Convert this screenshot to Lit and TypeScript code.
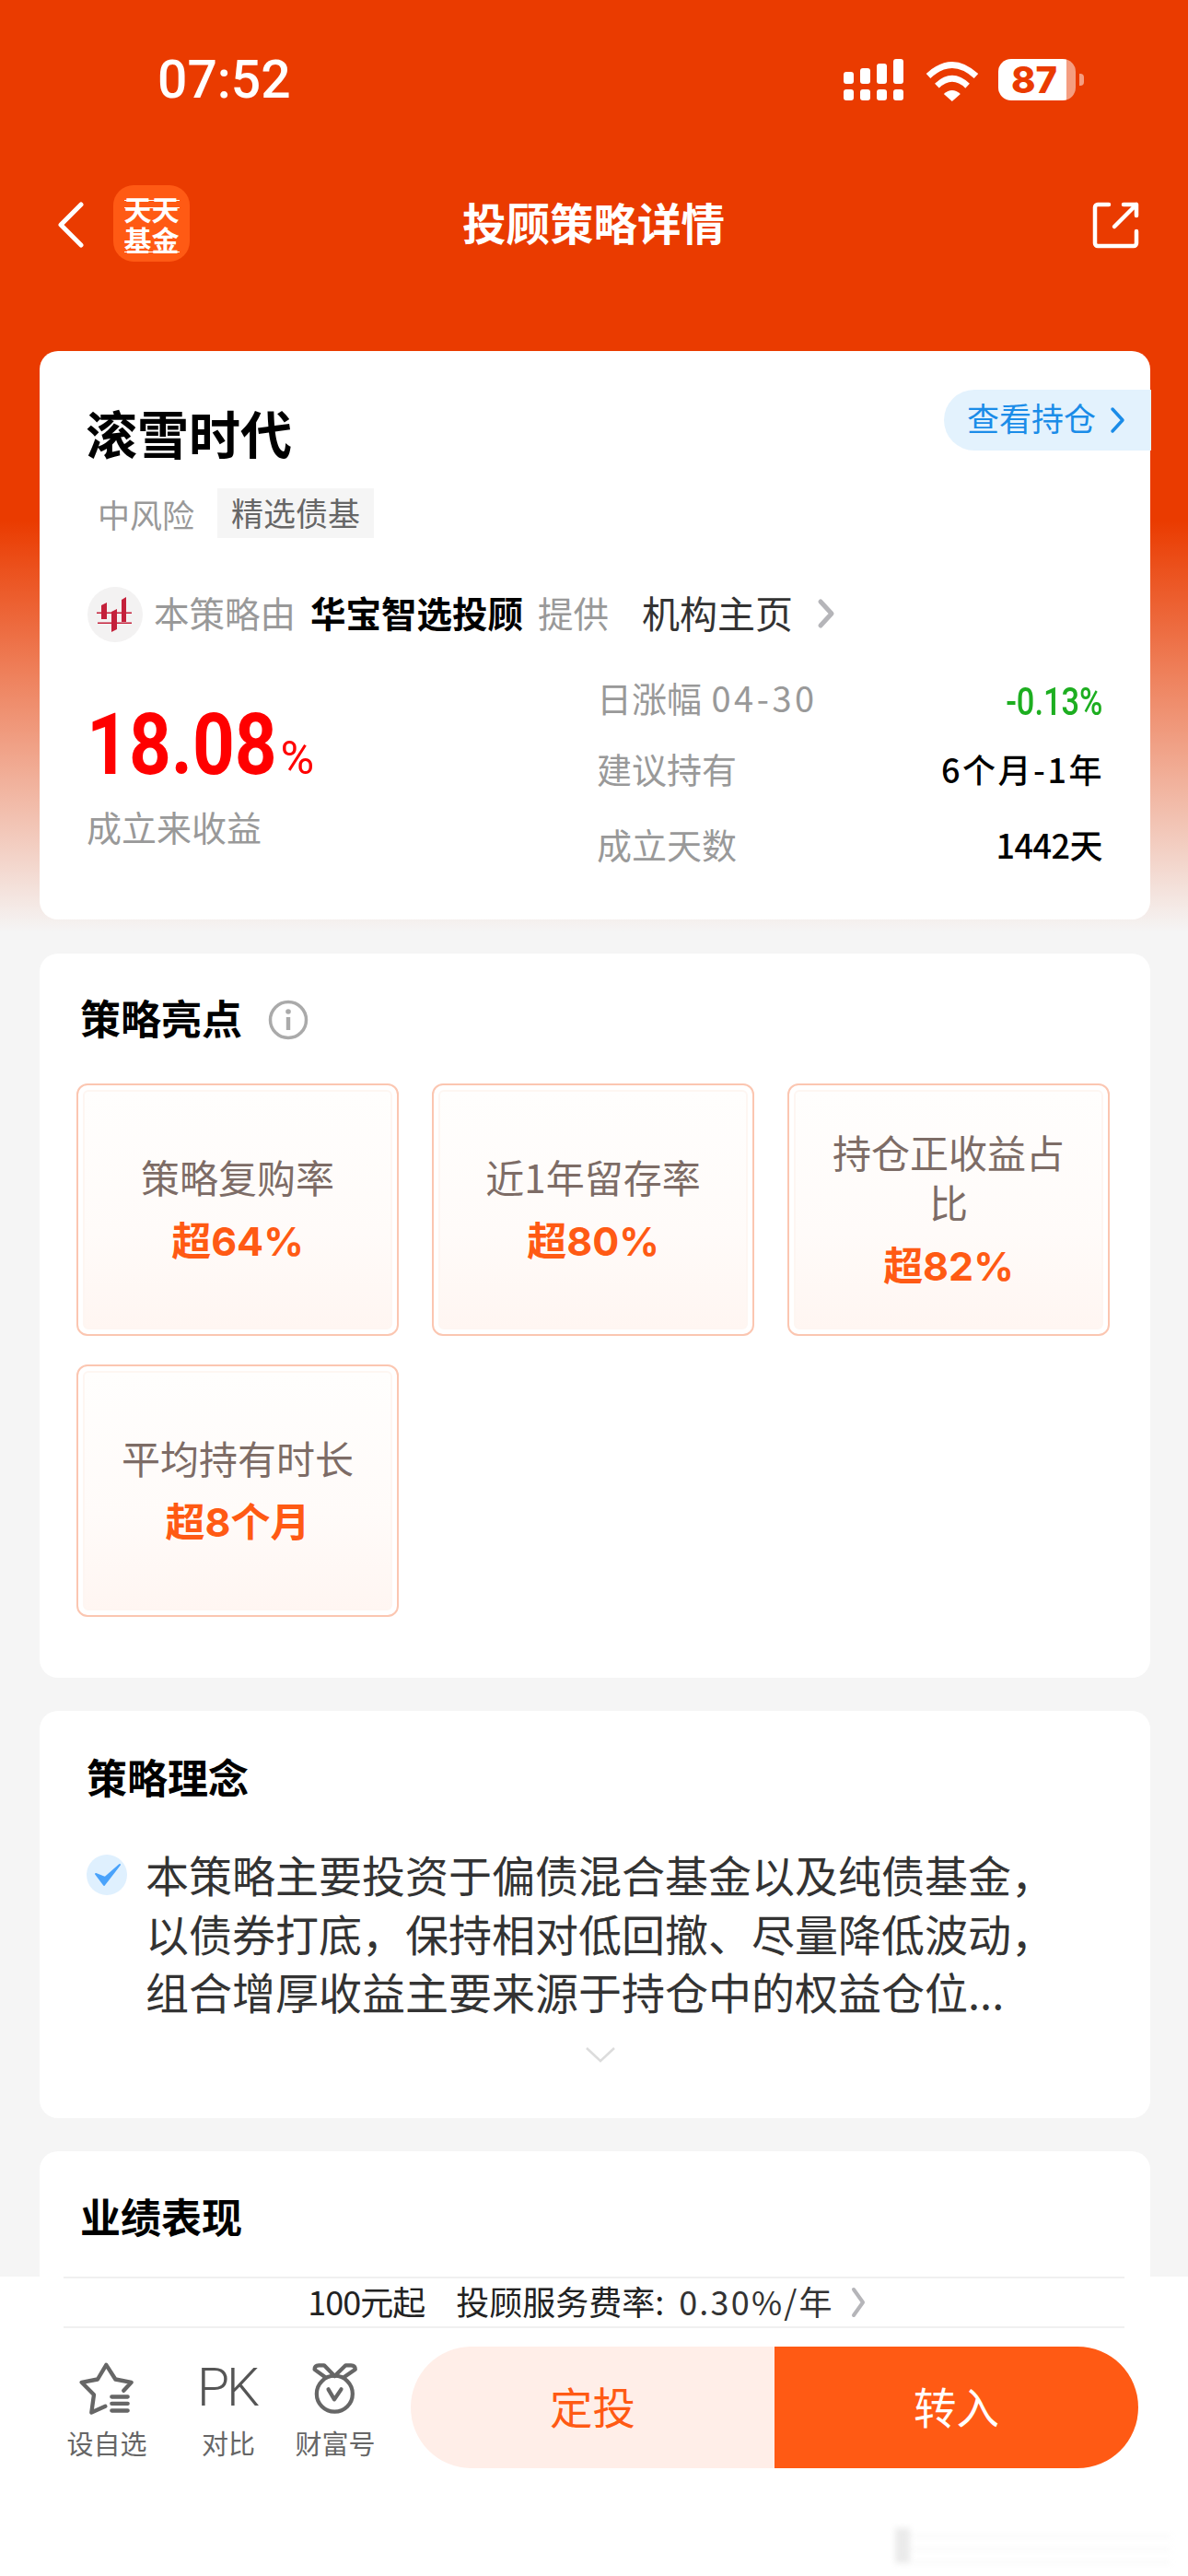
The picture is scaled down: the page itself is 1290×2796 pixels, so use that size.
import { LitElement, html, css } from "lit";
import { customElement } from "lit/decorators.js";

const tiles = [
  { label: "策略复购率", value: "超64%" },
  { label: "近1年留存率", value: "超80%" },
  { label: "持仓正收益占比", value: "超82%" },
  { label: "平均持有时长", value: "超8个月" },
];

@customElement("app-root")
export class AppRoot extends LitElement {
  static styles = css`
    :host {
      display: block;
      width: 1290px;
      height: 2796px;
      position: relative;
      overflow: hidden;
      background: #f5f5f5;
      font-family: "Noto Sans CJK SC", "Noto Sans", sans-serif;
      color: #000;
    }
    * { box-sizing: border-box; }
    .bg {
      position: absolute;
      left: 0; top: 0; right: 0;
      height: 1012px;
      background: linear-gradient(#ea3b00 0, #ea3b00 565px, #f5f5f5 1012px);
    }
    .page {
      position: relative;
      display: flex;
      flex-direction: column;
      height: 2796px;
    }
    .main { flex: 1; overflow: hidden; min-height: 0; }
    .status {
      height: 170px;
      padding: 64px 0 0 171px;
      display: flex;
      color: #fff;
    }
    .time { font: 500 57px/46px Roboto, sans-serif; width: 745px; }
    .signal { width: 65px; height: 45px; margin-right: 22px; }
    .wifi { width: 62px; height: 47px; margin-right: 19px; }
    .battery {
      width: 84px; height: 45px;
      border-radius: 14px;
      background: linear-gradient(90deg, #fff 88%, rgba(255,255,255,.5) 88%);
      color: #ea3b00;
      font: 800 40px/45px Inter, sans-serif;
      text-align: center;
      padding-right: 6px;
    }
    .nub {
      width: 5px; height: 13px;
      margin: 16px 0 0 4px;
      border-radius: 0 4px 4px 0;
      background: rgba(255,255,255,.5);
    }
    .nav {
      height: 211px;
      display: flex;
      align-items: flex-start;
      padding: 31px 52px 0 62px;
      position: relative;
      color: #fff;
    }
    .back { width: 30px; height: 50px; margin-top: 18px; }
    .logo {
      width: 83px; height: 83px;
      margin-left: 31px;
      border-radius: 22px;
      background: #ff5a14;
      display: flex; flex-direction: column; align-items: center; justify-content: center;
      font-weight: 700;
      font-size: 30px;
      line-height: 33px;
    }
    .logo span {
      display: block;
      background-repeat: no-repeat;
    }
    .logo .l1 { background-image: linear-gradient(transparent 7px, #fff 7px 8px, transparent 8px, transparent 15px, #fff 15px 16px, transparent 16px); }
    .logo .l2 { background-image: linear-gradient(transparent 30px, #fff 30px 31px, transparent 31px); }
    .title {
      flex: 1;
      font-size: 47.5px;
      font-weight: 700;
      line-height: 60px;
      margin: 10px 0 0 296px;
    }
    .share { width: 52px; height: 52px; margin-top: 17px; }
    .card {
      margin: 0 41px 36px 43px;
      background: #fff;
      border-radius: 20px;
      position: relative;
    }
    .c1 { height: 617px; padding: 53px 50px 0 50px; margin-bottom: 37px; }
    .name { font-size: 56px; line-height: 70px; font-weight: 700; }
    .pill {
      position: absolute;
      right: -1px; top: 42px;
      width: 225px; height: 66px;
      border-radius: 33px 0 0 33px;
      background: #e3f2fd;
      color: #1a8ce8;
      display: flex; align-items: flex-start;
      padding-left: 25px;
      font-size: 35px;
      line-height: 60px;
      gap: 14px;
    }
    .pill svg { width: 18px; height: 30px; margin-top: 18px; }
    .tags {
      display: flex; align-items: center;
      margin: 26px 0 0 13px;
      font-size: 35px;
      height: 54px;
      color: #999;
    }
    .tag {
      margin-left: 25px;
      background: #f5f5f5;
      color: #666;
      height: 54px; line-height: 52px;
      padding: 0 15px;
    }
    .provider {
      display: flex; align-items: flex-start;
      margin-top: 53px;
      height: 60px;
      font-size: 38.5px;
      line-height: 54px;
      color: #999;
      white-space: nowrap;
      margin-left: 2px;
    }
    .plogo {
      width: 60px; height: 60px;
      border-radius: 50%;
      background: #f3f2f2;
      margin-right: 12px;
      flex: none;
    }
    .provider b { color: #000; margin: 0 16px 0 16px; font-weight: 700; }
    .home { color: #333; font-size: 41px; margin-left: 36px; }
    .provider svg.ch { width: 20px; height: 34px; margin: 12px 0 0 26px; }
    .stats { display: flex; }
    .ret { width: 555px; padding-top: 67px; }
    .big {
      display: flex; align-items: baseline;
      color: #f00;
    }
    .num {
      display: inline-block;
      font: 700 93px/90px Roboto, sans-serif;
      transform: scaleX(.86);
      transform-origin: left center;
      margin-right: -30px;
      margin-left: 1px;
    }
    .big small { font: 400 50px/46px Roboto, sans-serif; }
    .retl { font-size: 38px; line-height: 50px; color: #999; margin-top: 18px; margin-left: 1px; }
    .rows { width: 549px; }
    .r {
      display: flex; justify-content: space-between; align-items: center;
      height: 40px;
      font-size: 38px;
      color: #999;
      line-height: 40px;
      white-space: nowrap;
    }
    .r i { font-style: normal; letter-spacing: 3.5px; margin-left: 2px; }
    .r1 { margin-top: 40px; }
    .r2 { margin-top: 37px; }
    .r3 { margin-top: 42px; }
    .v { color: #000; font-size: 36px; font-weight: 500; }
    .v.a { letter-spacing: 2.5px; margin-right: -2px; }
    .v.b { letter-spacing: -0.5px; }
    .up {
      color: #1dae20;
      font: 500 42px/40px Roboto, sans-serif;
      transform: scaleX(.82);
      transform-origin: right center;
      display: inline-block;
      margin-top: 10px;
    }
    .c2 { padding: 39px 40px 66px; }
    .h {
      font-size: 44px; line-height: 60px; font-weight: 700;
      display: flex; align-items: center;
      padding-left: 4px;
    }
    .h svg { width: 44px; height: 44px; margin-left: 28px; margin-top: 5px; }
    .grid {
      display: grid;
      grid-template-columns: repeat(3, 350px);
      column-gap: 36px;
      row-gap: 31px;
      margin-top: 42px;
    }
    .tile {
      height: 274px;
      border: 2px solid #fbc6b1;
      border-radius: 12px;
      padding: 5px;
      background: #fff;
    }
    .tin {
      height: 100%;
      border: 2px solid #fef6f2;
      border-radius: 6px;
      background: linear-gradient(#fffefd 0, #fffbf9 60%, #fff6f2 100%);
      display: flex; flex-direction: column; align-items: center; justify-content: center;
      padding: 0 30px 3px;
      text-align: center;
    }
    .tl { font-size: 42px; line-height: 54px; color: #7d6c66; }
    .tv { font-size: 43px; line-height: 54px; margin-top: 16px; color: #ff5a14; font-weight: 700; font-family: Inter, "Noto Sans CJK SC", sans-serif; }
    .c3 { height: 442px; padding: 41px 51px 0; }
    .c3 .h { padding-left: 0; }
    .idea { display: flex; margin-top: 44px; }
    .chk { width: 44px; height: 44px; flex: none; margin: 11px 21px 0 0; }
    .txt { font-size: 47px; line-height: 63.5px; color: #333; white-space: nowrap; margin-left: -1px; }
    .txt span { display: block; }
    .more { display: block; width: 34px; height: 18px; margin: 28px 0 0 541px; }
    .c4 { padding: 40px 40px 0; height: 300px; margin-bottom: 0; }
    .foot {
      height: 325px;
      background: #fff;
      position: relative;
      flex: none;
    }
    .fee {
      margin: 0 69px;
      height: 56px;
      padding: 0 14px 4px 0;
      border-top: 2px solid #f0f0f0;
      border-bottom: 2px solid #f0f0f0;
      display: flex; align-items: center; justify-content: center;
      font-size: 36px;
      color: #222;
      white-space: pre;
    }
    .fee .n { letter-spacing: -1px; margin-right: 34px; }
    .fee .p { letter-spacing: 2.2px; margin-left: 16px; color: #333; }
    .fee svg { width: 20px; height: 36px; margin: 4px 0 0 16px; }
    .acts { display: flex; padding: 20px 54px 0 70px; }
    .it {
      width: 92px;
      padding-top: 17px;
      display: flex; flex-direction: column; align-items: center;
      color: #666;
      font-size: 29px;
      line-height: 36px;
      white-space: nowrap;
    }
    .ic { height: 56px; width: 92px; display: flex; justify-content: center; align-items: center; margin-bottom: 13px; }
    .pk { font: 300 57px/56px Roboto, sans-serif; letter-spacing: -3px; color: #555; padding-right: 3px; }
    .g1 { margin-left: 40px; }
    .g2 { margin-left: 24px; }
    .btns {
      margin-left: 36px;
      width: 790px; height: 132px;
      display: flex;
      border-radius: 66px;
      overflow: hidden;
      font-size: 46.5px;
    }
    .btns div { flex: 1; display: flex; align-items: center; justify-content: center; padding-bottom: 6px; }
    .b1 { background: #ffeee8; color: #ff5a14; }
    .b2 { background: #ff5a14; color: #fff; }
    .wm {
      position: absolute;
      left: 972px; bottom: 14px;
      width: 300px; height: 38px;
      filter: blur(3px);
      opacity: .2;
      background:
        linear-gradient(90deg, #999 0 16px, transparent 16px),
        repeating-linear-gradient(0deg, #ccc 0 2px, transparent 2px 14px);
    }
  `;

  render() {
    return html`
      <div class="bg"></div>
      <div class="page" lang="zh-CN">
        <div class="main">
          <div class="status">
            <div class="time">07:52</div>
            <svg class="signal" viewBox="0 0 65 45" fill="#fff">
              <rect x="0" y="14" width="11" height="13" rx="3"></rect>
              <rect x="18" y="10" width="11" height="17" rx="3"></rect>
              <rect x="36" y="5" width="11" height="22" rx="3"></rect>
              <rect x="54" y="0" width="11" height="27" rx="3"></rect>
              <rect x="0" y="33" width="11" height="12" rx="3"></rect>
              <rect x="18" y="33" width="11" height="12" rx="3"></rect>
              <rect x="36" y="33" width="11" height="12" rx="3"></rect>
              <rect x="54" y="33" width="11" height="12" rx="3"></rect>
            </svg>
            <svg class="wifi" viewBox="365 65 185 140">
              <path d="M380 120 Q457 48 535 120" fill="none" stroke="#fff" stroke-width="20"></path>
              <path d="M408 152 Q457 105 507 152" fill="none" stroke="#fff" stroke-width="20"></path>
              <path d="M430 178 Q457 155 484 178 L457 202 Z" fill="#fff"></path>
            </svg>
            <div class="battery">87</div>
            <div class="nub"></div>
          </div>
          <div class="nav">
            <svg class="back" viewBox="0 0 30 50"><path d="M26 3 L4 25 L26 47" fill="none" stroke="#fff" stroke-width="5" stroke-linecap="round" stroke-linejoin="round"></path></svg>
            <div class="logo"><span class="l1">天天</span><span class="l2">基金</span></div>
            <div class="title">投顾策略详情</div>
            <svg class="share" viewBox="0 0 52 52" fill="none" stroke="#fff" stroke-width="4.5" stroke-linecap="round" stroke-linejoin="round">
              <path d="M18 4 H6 a3 3 0 0 0 -3 3 V46 a3 3 0 0 0 3 3 H45 a3 3 0 0 0 3 -3 V33"></path>
              <path d="M24 28 L48 4 M34 4 H48 V16"></path>
            </svg>
          </div>
          <div class="card c1">
            <div class="name">滚雪时代</div>
            <div class="pill">查看持仓<svg viewBox="0 0 18 30"><path d="M4 3 L15 15 L4 27" fill="none" stroke="#1a8ce8" stroke-width="3.5" stroke-linecap="round" stroke-linejoin="round"></path></svg></div>
            <div class="tags">中风险<div class="tag">精选债基</div></div>
            <div class="provider">
              <svg class="plogo" viewBox="0 0 60 60">
                <g fill="#c4213b">
                  <rect x="10" y="27.5" width="38" height="1.5"></rect>
                  <rect x="11" y="38.5" width="37" height="1.5"></rect>
                  <path d="M15 20 L21 17 V35 H15 Z"></path>
                  <path d="M26 27 L32 24 V46 L26 49 Z"></path>
                  <path d="M37 14 L42 11 V38 H37 Z"></path>
                </g>
              </svg>
              本策略由<b>华宝智选投顾</b>提供<span class="home">机构主页</span>
              <svg class="ch" viewBox="0 0 20 34"><path d="M4 4 L16 17 L4 30" fill="none" stroke="#b5b5b9" stroke-width="5" stroke-linecap="round" stroke-linejoin="round"></path></svg>
            </div>
            <div class="stats">
              <div class="ret">
                <div class="big"><span class="num">18.08</span><small>%</small></div>
                <div class="retl">成立来收益</div>
              </div>
              <div class="rows">
                <div class="r r1"><span>日涨幅 <i>04-30</i></span><span class="up">-0.13%</span></div>
                <div class="r r2"><span>建议持有</span><span class="v a">6个月-1年</span></div>
                <div class="r r3"><span>成立天数</span><span class="v b">1442天</span></div>
              </div>
            </div>
          </div>
          <div class="card c2">
            <div class="h">策略亮点
              <svg viewBox="0 0 44 44"><circle cx="22" cy="22" r="19.5" fill="none" stroke="#aaa" stroke-width="3.5"></circle><circle cx="22" cy="13" r="2.8" fill="#aaa"></circle><rect x="19.8" y="19" width="4.4" height="14" fill="#aaa"></rect></svg>
            </div>
            <div class="grid">
              ${tiles.map(
                (t) => html`<div class="tile"><div class="tin"><div class="tl">${t.label}</div><div class="tv">${t.value}</div></div></div>`
              )}
            </div>
          </div>
          <div class="card c3">
            <div class="h">策略理念</div>
            <div class="idea">
              <svg class="chk" viewBox="0 0 44 44"><circle cx="22" cy="22" r="22" fill="#dff0fe"></circle><path d="M10 21 L19 33 L36 11 L20 25 Z" fill="#4aa3fb" stroke="#4aa3fb" stroke-width="2" stroke-linejoin="round"></path></svg>
              <div class="txt">
                <span>本策略主要投资于偏债混合基金以及纯债基金，</span>
                <span>以债券打底，保持相对低回撤、尽量降低波动，</span>
                <span>组合增厚收益主要来源于持仓中的权益仓位...</span>
              </div>
            </div>
            <svg class="more" viewBox="0 0 34 18"><path d="M2 2 L17 16 L32 2" fill="none" stroke="#dcdcdc" stroke-width="2.5"></path></svg>
          </div>
          <div class="card c4">
            <div class="h">业绩表现</div>
          </div>
        </div>
        <div class="foot">
          <div class="fee"><span class="n">100元起</span>投顾服务费率:<span class="p">0.30%/年</span><svg viewBox="0 0 20 36"><path d="M5 4 L15 18 L5 32" fill="none" stroke="#b5b5b9" stroke-width="4" stroke-linecap="round" stroke-linejoin="round"></path></svg></div>
          <div class="acts">
            <div class="it">
              <div class="ic"><svg width="60" height="57" viewBox="140 100 180 170" fill="none" stroke="#666" stroke-width="13" stroke-linecap="round" stroke-linejoin="round">
                <path d="M225 243 L180 263 L188 205 L148 165 L200 155 L228 108 L258 155 L310 165 L285 192"></path>
                <path d="M246 212 H298 M246 234 H298 M246 257 H298"></path>
              </svg></div>设自选
            </div>
            <div class="it g1"><div class="ic pk">PK</div>对比</div>
            <div class="it g2">
              <div class="ic"><svg width="52" height="57" viewBox="895 100 160 175" fill="none" stroke="#666" stroke-width="13" stroke-linecap="round" stroke-linejoin="round">
                <circle cx="973" cy="205" r="60"></circle>
                <path d="M942 150 L906 124 Q906 110 920 110 H938 L973 146"></path>
                <path d="M1004 150 L1042 124 Q1042 110 1028 110 H1010 L973 146"></path>
                <path d="M952 190 L972 224 L995 190"></path>
              </svg></div>财富号
            </div>
            <div class="btns"><div class="b1">定投</div><div class="b2">转入</div></div>
          </div>
          <div class="wm"></div>
        </div>
      </div>
    `;
  }
}
